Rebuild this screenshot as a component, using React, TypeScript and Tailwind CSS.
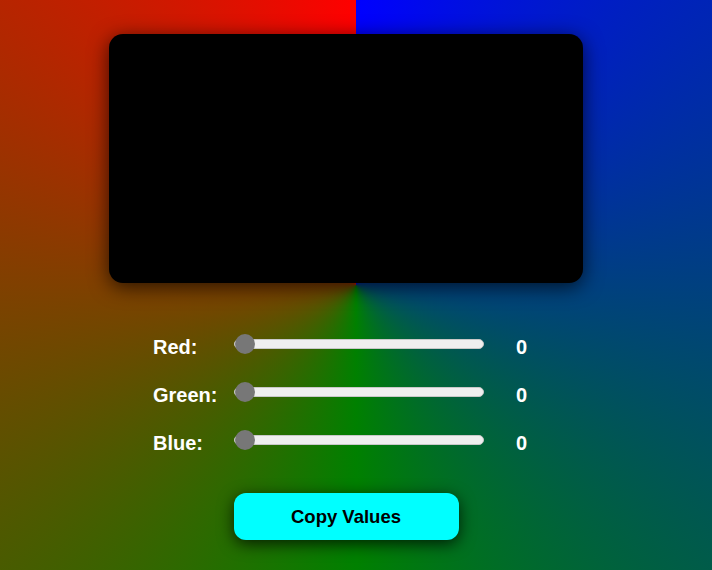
import { useState } from 'react';

const sliderClass =
  "appearance-none w-[250px] h-[10px] mb-[6px] rounded-full bg-[#efefef] border border-[#c8c8c8] outline-none cursor-pointer " +
  "[&::-webkit-slider-thumb]:appearance-none [&::-webkit-slider-thumb]:w-5 [&::-webkit-slider-thumb]:h-5 " +
  "[&::-webkit-slider-thumb]:rounded-full [&::-webkit-slider-thumb]:bg-[#777777] " +
  "[&::-moz-range-thumb]:w-5 [&::-moz-range-thumb]:h-5 [&::-moz-range-thumb]:rounded-full [&::-moz-range-thumb]:bg-[#777777] [&::-moz-range-thumb]:border-0";

function ColorRow({ label, value, onChange }: { label: string; value: number; onChange: (v: number) => void }) {
  return (
    <div className="flex items-center h-8">
      <span className="w-[81px] text-[20px] font-bold text-white">{label}</span>
      <input
        type="range"
        min={0}
        max={255}
        value={value}
        onChange={(e) => onChange(Number(e.target.value))}
        className={sliderClass}
      />
      <span className="ml-8 text-[20px] font-bold text-white">{value}</span>
    </div>
  );
}

export default function App() {
  const [r, setR] = useState(0);
  const [g, setG] = useState(0);
  const [b, setB] = useState(0);

  return (
    <div
      className="min-h-screen w-full bg-[conic-gradient(from_0deg_at_50%_50%,#0000ff,#008000,#ff0000)]"
      style={{ fontFamily: '"Liberation Sans", Arial, sans-serif' }}
    >
      <div className="w-[692px] flex flex-col items-center pt-[34px]">
        {/* Preview */}
        <div
          className="w-[474px] h-[249px] rounded-[14px] shadow-[0_4px_20px_rgba(0,0,0,0.7)]"
          style={{ backgroundColor: `rgb(${r}, ${g}, ${b})` }}
        />

        {/* Sliders */}
        <div className="mt-[48px] flex flex-col gap-4 w-[386px]">
          <ColorRow label="Red:" value={r} onChange={setR} />
          <ColorRow label="Green:" value={g} onChange={setG} />
          <ColorRow label="Blue:" value={b} onChange={setB} />
        </div>

        {/* Copy button */}
        <button
          onClick={() => navigator.clipboard?.writeText(`rgb(${r}, ${g}, ${b})`)}
          className="mt-[34px] w-[225px] h-[47px] rounded-xl bg-[#00ffff] text-black text-[18.5px] font-bold shadow-[0_4px_16px_rgba(0,0,0,0.75)]"
        >
          Copy Values
        </button>
      </div>
    </div>
  );
}
